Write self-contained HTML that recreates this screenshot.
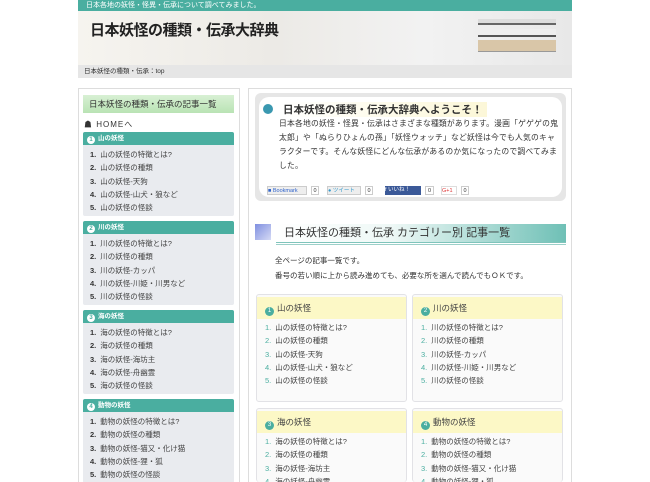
<!DOCTYPE html>
<html style="width:650px;height:482px;overflow:hidden"><head><meta charset="utf-8"><style>
*{margin:0;padding:0;box-sizing:border-box}
body{width:650px;height:482px;overflow:hidden;background:#fff;font-family:"Liberation Sans","Noto Sans CJK JP",sans-serif;color:#333;position:relative}
.a{position:absolute}
.top{left:78px;top:0;width:494px;height:11px;background:#4aaea0;color:#fff;font-size:7px;line-height:11px;padding-left:8px}
.hdr{left:78px;top:11px;width:494px;height:54px;background:linear-gradient(90deg,#f6f4ef,#eceae6 40%,#f2f2f2 70%,#e8e8e8)}
.hdr h1{position:absolute;left:12px;top:8px;font-size:15px;font-weight:bold;color:#222;letter-spacing:-0.5px}
.bc{left:78px;top:65px;width:494px;height:13px;background:#e6e6e6;font-size:6.5px;line-height:13px;padding-left:6px}
.side{left:78px;top:88px;width:162px;height:394px;border:1px solid #ddd;border-bottom:none;background:#fff}
.st{left:83px;top:95px;width:151px;height:18px;background:linear-gradient(#d8f0d4,#b9e3b4);font-size:8.5px;line-height:18px;padding-left:6px;color:#333}
.home{left:84px;top:119px;font-size:8px;letter-spacing:1px}
.sec{position:absolute;left:83px;width:151px;background:#e9ebef;border-radius:2px}
.sec .h{height:13px;background:#4aaea0;color:#fff;font-size:6.5px;line-height:13px;padding-left:4px;font-weight:bold;border-radius:2px 2px 0 0}
.n{display:inline-block;width:8px;height:8px;border-radius:50%;background:#fff;color:#4aaea0;font-size:6px;line-height:8px;text-align:center;margin-right:3px;vertical-align:-1px}
.sec ol{list-style:none;padding:3px 0 2px 7px}
.sec li{font-size:7.5px;line-height:13.3px;color:#444}
.sec li b{margin-right:4px;color:#333}
.main{left:248px;top:88px;width:324px;height:394px;border:1px solid #ddd;border-bottom:none;background:#fff}
.wel{left:255px;top:93px;width:311px;height:108px;background:#e6e6e6;border-radius:6px;padding:4px}
.wel .in{background:#fff;border-radius:10px;height:100px;position:relative}
.wt{position:absolute;left:20px;top:5px;font-size:10.5px;font-weight:bold;background:linear-gradient(90deg,#fff,#fcf7d8);padding:0 4px}
.dot{position:absolute;left:4px;top:7px;width:10px;height:10px;border-radius:50%;background:#3a98b0}
.wp{position:absolute;left:20px;top:20px;width:280px;font-size:7.8px;line-height:14px;letter-spacing:.2px}
.soc{position:absolute;top:89px;height:9px;font-size:5.5px;line-height:9px}
.cat{left:255px;top:224px;width:311px;height:21px}
.cat .sq{position:absolute;left:0;top:0;width:16px;height:16px;background:linear-gradient(135deg,#7f8fe0,#d5daf5)}
.cat .bar{position:absolute;left:21px;top:0;width:290px;height:19px;background:linear-gradient(90deg,#fff,#eef8f6 40%,#6fc0b6);font-size:11px;line-height:19px;padding-left:8px;color:#333;border-bottom:1px solid #7fc4bb}
.cat .ul{position:absolute;left:21px;top:20px;width:290px;height:1px;background:#9cd0c9}
.mt{left:275px;top:253px;font-size:7.5px;line-height:15px}
.card{position:absolute;width:151px;height:108px;border:1px solid #e2e2e6;border-radius:3px;background:#fafafa;overflow:hidden}
.card .h{margin:2px 0 0 0;height:22px;background:#fcf8c6;font-size:8.5px;line-height:22px;padding-left:8px;color:#444}
.card .h .n{background:#4aaea0;color:#fff;width:9px;height:9px;line-height:9px}
.card ol{list-style:none;padding:2px 0 0 8px}
.card li{font-size:7.5px;line-height:13.3px;color:#444}
.card li b{font-weight:normal;color:#4aaea0;margin-right:4px}
</style></head><body>
<div class="a top">日本各地の妖怪・怪異・伝承について調べてみました。</div>
<div class="a hdr"><h1>日本妖怪の種類・伝承大辞典</h1>
<div style="position:absolute;left:400px;top:8px;width:78px;height:6px;background:#ddd;border-bottom:2px solid #666"></div>
<div style="position:absolute;left:400px;top:18px;width:78px;height:8px;background:#eee;border-bottom:2px solid #555"></div>
<div style="position:absolute;left:400px;top:29px;width:78px;height:12px;background:#d9c6a8;border-bottom:1px solid #999"></div></div>
<div class="a bc">日本妖怪の種類・伝承：top</div>

<div class="a side"></div>
<div class="a st">日本妖怪の種類・伝承の記事一覧</div>
<div class="a home">&#9751; HOMEへ</div>
<div class="sec" style="top:132px"><div class="h"><span class="n">1</span>山の妖怪</div><ol><li><b>1.</b>山の妖怪の特徴とは?</li><li><b>2.</b>山の妖怪の種類</li><li><b>3.</b>山の妖怪-天狗</li><li><b>4.</b>山の妖怪-山犬・狼など</li><li><b>5.</b>山の妖怪の怪談</li></ol></div>
<div class="sec" style="top:221px"><div class="h"><span class="n">2</span>川の妖怪</div><ol><li><b>1.</b>川の妖怪の特徴とは?</li><li><b>2.</b>川の妖怪の種類</li><li><b>3.</b>川の妖怪-カッパ</li><li><b>4.</b>川の妖怪-川姫・川男など</li><li><b>5.</b>川の妖怪の怪談</li></ol></div>
<div class="sec" style="top:310px"><div class="h"><span class="n">3</span>海の妖怪</div><ol><li><b>1.</b>海の妖怪の特徴とは?</li><li><b>2.</b>海の妖怪の種類</li><li><b>3.</b>海の妖怪-海坊主</li><li><b>4.</b>海の妖怪-舟幽霊</li><li><b>5.</b>海の妖怪の怪談</li></ol></div>
<div class="sec" style="top:399px"><div class="h"><span class="n">4</span>動物の妖怪</div><ol><li><b>1.</b>動物の妖怪の特徴とは?</li><li><b>2.</b>動物の妖怪の種類</li><li><b>3.</b>動物の妖怪-猫又・化け猫</li><li><b>4.</b>動物の妖怪-狸・狐</li><li><b>5.</b>動物の妖怪の怪談</li></ol></div>

<div class="a main"></div>
<div class="a wel"><div class="in"><div class="dot"></div><div class="wt">日本妖怪の種類・伝承大辞典へようこそ！</div>
<div class="wp">日本各地の妖怪・怪異・伝承はさまざまな種類があります。漫画「ゲゲゲの鬼太郎」や「ぬらりひょんの孫」「妖怪ウォッチ」など妖怪は今でも人気のキャラクターです。そんな妖怪にどんな伝承があるのか気になったので調べてみました。</div>
<div class="soc" style="left:8px;width:40px;background:#eee;border:1px solid #ccc;color:#36c">&#9632; Bookmark</div><div class="soc" style="left:52px;width:8px;border:1px solid #ccc;text-align:center">0</div>
<div class="soc" style="left:68px;width:34px;background:#eee;border:1px solid #ccc;color:#39c">&#9679; ツイート</div><div class="soc" style="left:106px;width:8px;border:1px solid #ccc;text-align:center">0</div>
<div class="soc" style="left:126px;width:36px;background:#3b5998;color:#fff">f いいね！</div><div class="soc" style="left:166px;width:9px;border:1px solid #ccc;text-align:center">0</div>
<div class="soc" style="left:182px;width:16px;border:1px solid #ddd;color:#d33">G+1</div><div class="soc" style="left:202px;width:8px;border:1px solid #ccc;text-align:center">0</div>
</div></div>

<div class="a cat"><div class="sq"></div><div class="bar">日本妖怪の種類・伝承 カテゴリー別 記事一覧</div><div class="ul"></div></div>
<div class="a mt">全ページの記事一覧です。<br>番号の若い順に上から読み進めても、必要な所を選んで読んでもＯＫです。</div>

<div class="card" style="left:256px;top:294px"><div class="h"><span class="n">1</span>山の妖怪</div><ol><li><b>1.</b>山の妖怪の特徴とは?</li><li><b>2.</b>山の妖怪の種類</li><li><b>3.</b>山の妖怪-天狗</li><li><b>4.</b>山の妖怪-山犬・狼など</li><li><b>5.</b>山の妖怪の怪談</li></ol></div>
<div class="card" style="left:412px;top:294px"><div class="h"><span class="n">2</span>川の妖怪</div><ol><li><b>1.</b>川の妖怪の特徴とは?</li><li><b>2.</b>川の妖怪の種類</li><li><b>3.</b>川の妖怪-カッパ</li><li><b>4.</b>川の妖怪-川姫・川男など</li><li><b>5.</b>川の妖怪の怪談</li></ol></div>
<div class="card" style="left:256px;top:408px;height:74px;border-bottom:none"><div class="h"><span class="n">3</span>海の妖怪</div><ol><li><b>1.</b>海の妖怪の特徴とは?</li><li><b>2.</b>海の妖怪の種類</li><li><b>3.</b>海の妖怪-海坊主</li><li><b>4.</b>海の妖怪-舟幽霊</li></ol></div>
<div class="card" style="left:412px;top:408px;height:74px;border-bottom:none"><div class="h"><span class="n">4</span>動物の妖怪</div><ol><li><b>1.</b>動物の妖怪の特徴とは?</li><li><b>2.</b>動物の妖怪の種類</li><li><b>3.</b>動物の妖怪-猫又・化け猫</li><li><b>4.</b>動物の妖怪-狸・狐</li></ol></div>
</body></html>
